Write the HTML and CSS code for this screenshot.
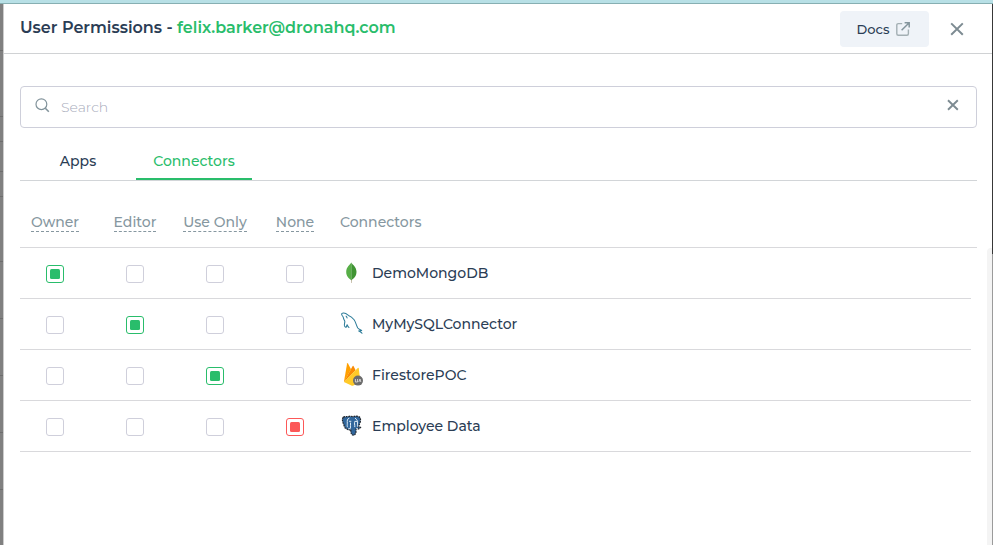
FILE: index.html
```html
<!DOCTYPE html>
<html lang="en">
<head>
<meta charset="utf-8">
<title>User Permissions</title>
<link rel="stylesheet" href="styles.css">
</head>
<body>
<div class="topbar"></div>
<div class="shell">
  <div class="backdrop"><i></i><i></i><i></i><i></i><i></i><i></i><i></i><i></i><i></i><i></i></div>
  <main class="panel">
    <header class="header">
      <h1 class="title"><span class="title-label">User Permissions -</span> <span class="email">felix.barker@dronahq.com</span></h1>
      <button class="docs"><span>Docs</span>
        <svg width="14" height="14" viewBox="0 0 14 14" fill="none" stroke="#a3afb3" stroke-width="1.4"><path d="M6.2 1.6H2.3Q.8 1.6.8 3.1v8.6q0 1.5 1.5 1.5h8.6q1.5 0 1.5-1.5V7.6"/><path d="M5.6 8.3 12.7 1.2M8.6.8h4.6v4.6" stroke="#84959d" stroke-width="1.5"/></svg>
      </button>
      <button class="close"><svg width="14" height="14" viewBox="0 0 14 14" stroke="#7d8b92" stroke-width="2"><path d="m1.2 1.4 11.6 11.4M12.8 1.4 1.2 12.8"/></svg></button>
    </header>
    <div class="search">
      <svg width="15" height="15" viewBox="0 0 15 15" fill="none" stroke="#82939b" stroke-width="1.2"><circle cx="6.4" cy="6.2" r="5.4"/><path d="m10.3 10.2 3.5 3.6" stroke-width="1.6"/></svg>
      <span class="placeholder">Search</span>
      <svg width="12" height="12" viewBox="0 0 12 12" stroke="#7d8b92" stroke-width="1.9"><path d="m1 1.2 9.8 9.6M10.8 1.2 1 10.8"/></svg>
    </div>
    <nav class="tabs"><a class="tab">Apps</a><a class="tab active">Connectors</a></nav>
    <section class="table">
      <div class="row head">
        <div class="cell"><span class="hint">Owner</span></div><div class="cell"><span class="hint">Editor</span></div><div class="cell"><span class="hint">Use Only</span></div><div class="cell"><span class="hint">None</span></div>
        <div class="name">Connectors</div>
      </div>
      <div class="row">
        <div class="cell"><i class="box on"></i></div><div class="cell"><i class="box"></i></div><div class="cell"><i class="box"></i></div><div class="cell"><i class="box"></i></div>
        <svg class="logo" width="24" height="24" viewBox="0 0 24 24"><path d="M11.1 18h.9v4h-.6z" fill="#b6aa91"/><path d="M11.3 1.4C10.4 3.5 6.2 5.4 6.2 11c0 4 2.7 6.7 5.1 8.2Z" fill="#57ae47"/><path d="M11.3 1.4c1 2.1 5.2 4.4 5.2 9.4 0 4.3-2.7 6.9-5.2 8.4Z" fill="#409433"/></svg>
        <div class="name">DemoMongoDB</div>
      </div>
      <div class="row">
        <div class="cell"><i class="box"></i></div><div class="cell"><i class="box on"></i></div><div class="cell"><i class="box"></i></div><div class="cell"><i class="box"></i></div>
        <svg class="logo" width="24" height="24" viewBox="0 0 24 24" fill="none" stroke="#2d7c99" stroke-width="1.05" stroke-linecap="round" stroke-linejoin="round"><path d="M22 21.3c-.8-1.1-2.2-1.7-3.4-2.4l3.1-.5c-1.3-.8-3-1.2-3.9-2.4-1.5-2.3-1.8-5.5-3.7-8.2-1.8-2.4-3.2-3.6-5.6-4.4C6.6 1.9 5.1.7 3.2 1.1 1.5 1.5 1.2 2 2 3.2c.7 1 1.2 1.4 1.5 2.9.2 1.3 1 2 1.3 3.1.2 1.4-.8 3.1-.3 4.7.5 1.3 1.3 1.5 1.8 1.1l.8-2.2c.5 1.3.9 2.2 1.9 2.6"/><path d="M6.1 4.2c.6.6.8 1 1 1.7"/></svg>
        <div class="name">MyMySQLConnector</div>
      </div>
      <div class="row">
        <div class="cell"><i class="box"></i></div><div class="cell"><i class="box"></i></div><div class="cell"><i class="box on"></i></div><div class="cell"><i class="box"></i></div>
        <svg class="logo" width="24" height="24" viewBox="0 0 24 24"><path d="M4 18.6 7.1.5q.4-.8.9 0l3 5.8-6.8 12.4Z" fill="#ffa000"/><path d="m4 18.8 6.9-12.5 1.8-3.2q.4-.5.8 0l2.1 4.1L4.1 19Z" fill="#f98b05"/><path d="M3.9 19 17.8 5.1q.8-.7 1 .2l1.5 13.4-6.9 3.9q-1 .5-2 0Z" fill="#ffca28"/><circle cx="18" cy="17.6" r="5" fill="#6c6c6c"/><path d="M15.4 16v3h2.2v-3m1.2 3 1.2-3 .8 3" fill="none" stroke="#ddd" stroke-width=".9"/></svg>
        <div class="name">FirestorePOC</div>
      </div>
      <div class="row">
        <div class="cell"><i class="box"></i></div><div class="cell"><i class="box"></i></div><div class="cell"><i class="box"></i></div><div class="cell"><i class="box off"></i></div>
        <svg class="logo" width="24" height="24" viewBox="0 0 24 24"><path d="M3.2 3.3C5.3 2 7 3.1 8.3 2.6c1.9-.7 3.5-.3 4.9.1 2.6-1.3 5.9-.5 7 1.2 1 2.4-.5 6.5-2 8.7 1.2.5 2.1.2 2.5.7-1 1.7-2.9 2-4.6 1.9.2 3.2-.7 6-2.5 6-2.3.1-2.9-2.3-2.8-6-1.3 1.1-2.8.9-3.9-.4-1.4.4-2.1-1.1-3-3.8C2.7 8.3 1.7 5 3.2 3.3Z" fill="#31669b" stroke="#20242a" stroke-width="1.2" stroke-dasharray="1.8 .8"/><path d="M9.4 4.1C7 4.9 7.2 6.6 7.3 9.2c.1 2-.5 2.8.4 4M10.4 14.4c.4-2.4-.2-3.9.1-5.8M9.1 7.3h2.2M15 4.1c2.2 1.5 2.8 3.3 2.6 4.9-.2 1.8-.4 2.3.3 3.9M17.2 7.4h-2.4c-.7 1.5.1 3.5 0 5.7M10.4 14.8l-2-.2M16 14.8h2" fill="none" stroke="#e1edf6" stroke-width="1"/></svg>
        <div class="name">Employee Data</div>
      </div>
    </section>
    <div class="scroll"></div>
  </main>
  <div class="edge"></div>
</div>
</body>
</html>
```
FILE: styles.css
```css
*{box-sizing:border-box}
body{margin:0;height:545px;overflow:hidden;background:#fff;color:#2b3d55;font:500 14px/20px Montserrat,Inter,sans-serif}
.topbar{height:4px;background:#b8e0e6;border-bottom:1px solid #87afb2}
.shell{display:flex;height:541px}
.backdrop{width:4px;background:#808080;border-right:1px solid #ccc;display:grid;grid-template-rows:47px 66px 25px 30px 25px 65px 57px 57px 57px 57px}
.backdrop i{border-bottom:1px solid #6d6d6d}
.panel{width:988px;position:relative}
.header{height:50px;border-bottom:1px solid #d0d2d4;display:flex;align-items:center;padding-left:16px}
.title{margin:0 auto 2px 0;font-size:16px;font-weight:600;line-height:20px;white-space:nowrap}
.email{color:#29bd6b}
button{border:0;background:none;font:inherit;color:inherit;padding:0}
.docs{width:89px;height:36px;border-radius:4px;background:#eff3f8;display:flex;align-items:center;padding-left:16px;gap:7px}
.docs span{width:34px;font-size:13px}
.docs svg{margin-left:-1px}
.close{height:14px;margin:0 28px 0 21px;width:14px}
svg{display:block;flex:none}
.search{margin:32px 15px 0 16px;height:42px;border:1px solid #cecfda;border-radius:4px;display:flex;align-items:center;padding:0 17px 0 14px}
.search svg{margin-bottom:4px}
.placeholder{margin-left:11px;color:#a7abba;font-weight:300;flex:1}
.tabs{display:flex;margin:0 15px 0 16px;height:53px;border-bottom:1px solid #d2d5d8}
.tab{width:116px;text-align:center;padding-top:23px;height:52px}
.active{color:#29bd6b;border-bottom:2px solid #29bd6b}
.table{margin-left:16px;width:951px}
.row{height:51px;border-bottom:1px solid #d9d9dc;display:flex;align-items:center}
.head{width:957px;height:67px;padding-top:15px;color:#8697a0}
.cell{width:80px;display:flex;justify-content:center}
.cell:first-child{width:70px;margin-right:5px}
.cell:nth-child(4){margin-right:5px}
.hint{height:20px;border-bottom:1px dashed #8697a0;white-space:nowrap}
.box{width:18px;height:18px;border:1px solid #cfcfdb;border-radius:3px;background:#fff;margin-top:2px;display:flex;align-items:center;justify-content:center}
.on{border-color:#29bd6b}
.off{border-color:#fc5858}
.on::after,.off::after{content:"";width:10px;height:10px;border-radius:1.5px;background:#29bd6b}
.off::after{background:#fc5858}
.logo{margin-right:8px}
.name{white-space:nowrap}
.scroll{position:absolute;right:0;top:244px;width:5px;bottom:0;background:#f4f4f4;border-radius:4px 0 0 0}
.edge{width:1px;background:linear-gradient(#383838 250px,#9b9b9b 250px)}
```
